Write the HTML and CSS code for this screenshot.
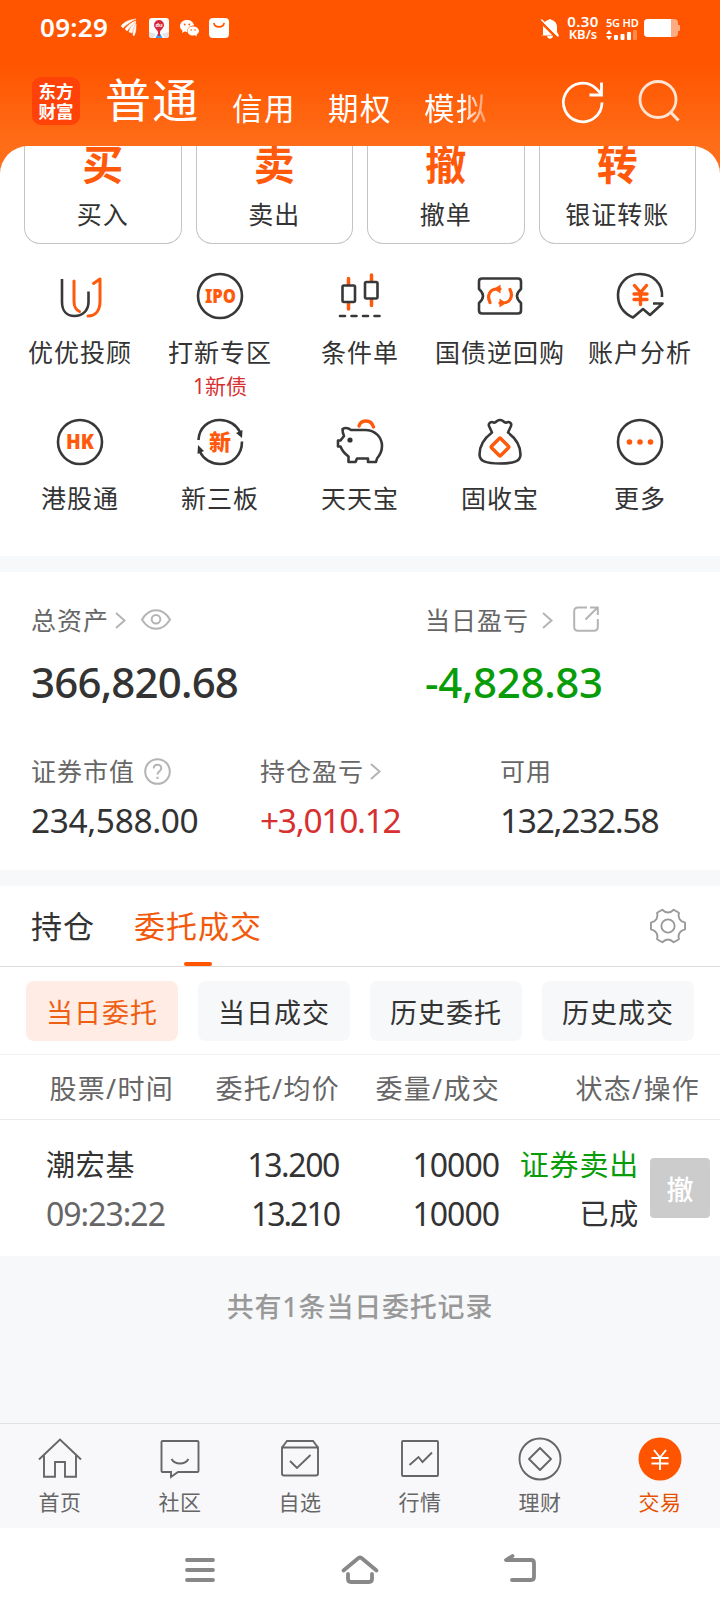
FILE: index.html
```html
<!DOCTYPE html>
<html lang="zh-CN">
<head>
    <meta charset="UTF-8">
    <meta name="viewport" content="width=device-width, initial-scale=1.0">
    <title>东方财富 交易</title>
    <link rel="stylesheet" href="styles.css">
</head>
<body>
    <header class="top">
        <!-- Status bar -->
        <div class="status">
            <span class="clock">09:29</span>
            <svg class="st-wing" width="16" height="18" viewBox="0 0 16 18" fill="#fff"><path d="M0 7C4 2 9 1 15 0 9 3 6 5 2 9zM4 10C7 6 11 3 15 2 12 5 9 8 6 12zM8 13c1-4 3-7 7-10-1 3-3 6-4 11zM12 16c0-4 1-7 3-11 0 4 0 8-2 12z" stroke="#fff" stroke-width=".5"/></svg>
            <svg class="st-map" width="20" height="20" viewBox="0 0 20 20"><rect width="20" height="20" rx="3" fill="#fff"/><path d="M0 14l7 2-3 4H3a3 3 0 0 1-3-3zM20 14l-7 2 3 4h1a3 3 0 0 0 3-3z" fill="#e6e3e6"/><path d="M8.500 16h3l2 4h-7z" fill="#4d9be8"/><path d="M10 2a5 5 0 0 0-5 5c0 3 3 4.500 4 7v4h2v-4c1-2.500 4-4 4-7a5 5 0 0 0-5-5z" fill="#d9283c"/><text x="10" y="9" font-size="5.500" font-weight="700" text-anchor="middle" fill="#fff">du</text></svg>
            <svg class="st-chat" width="19" height="17" viewBox="0 0 19 17" fill="#fff"><path d="M7 0C3 0 0 2.700 0 6c0 2 1 3.500 2.500 4.500L2 13l2.500-1.500L7 12c0-4 3-6.500 7-6.500C13.500 2 10.500 0 7 0z"/><path d="M13 6.500c-3.300 0-5.500 2-5.500 4.500s2.200 4.500 5.500 4.500l1.800-.3L17 16.300l-.4-1.900c1.400-.8 2.400-2 2.400-3.400 0-2.500-2.700-4.500-6-4.500z"/><g fill="#ff5500"><circle cx="4.700" cy="4.500" r=".9"/><circle cx="9.300" cy="4.500" r=".9"/><circle cx="11.200" cy="10" r=".8"/><circle cx="15" cy="10" r=".8"/></g></svg>
            <svg class="st-bag" width="20" height="20" viewBox="0 0 20 20"><rect width="20" height="20" rx="4" fill="#fff"/><path d="M5 5.500c1 4.500 9 4.500 10 0" fill="none" stroke="#ff5500" stroke-width="1.700" stroke-linecap="round"/></svg>
            <div class="status-right">
                <svg width="18" height="21" viewBox="0 0 18 21"><path d="M2 17V9c0-4 2.500-6.500 5.500-7a1.600 1.600 0 0 1 3 0C13.500 2.500 16 5 16 9v5l2 3.500H0zM6 18h6c-.5 3.500-5.500 3.500-6 0z" fill="#fff"/><path d="M-.5 3.500L17 21" stroke="#ff5500" stroke-width="2.500"/><path d="M.3 1.500L17.500 18.500" stroke="#fff" stroke-width="1.500"/></svg>
                <div class="speed"><span>0.30</span><span>KB/s</span></div>
                <div class="signal">
                    <span>5G HD</span>
                    <svg width="31" height="10" viewBox="0 0 31 10" fill="#fff"><path d="M0 4l3-4 3 4zM0 6l3 4 3-4z"/><rect x="8" y="5" width="4" height="5" rx="1"/><rect x="14.500" y="4" width="4" height="6" rx="1"/><rect x="21" y="2" width="4" height="8" rx="1"/><rect x="27" y="0" width="4" height="10" rx="1" opacity=".3"/></svg>
                </div>
                <svg width="36" height="18" viewBox="0 0 36 18"><rect width="34" height="18" rx="4" fill="#ffab82"/><path d="M34 6h1q1 0 1 1v4q0 1-1 1h-1z" fill="#ffab82"/><path d="M4 0h23v18H4a4 4 0 0 1-4-4V4a4 4 0 0 1 4-4z" fill="#fff"/></svg>
            </div>
        </div>

        <!-- Account type tabs -->
        <div class="account-bar">
            <div class="logo"><span>东方</span><span>财富</span></div>
            <nav class="account-tabs">
                <a class="account-tab active">普通</a>
                <a class="account-tab">信用</a>
                <a class="account-tab">期权</a>
                <a class="account-tab fade">模拟</a>
            </nav>
            <svg class="refresh" width="42" height="42" viewBox="0 0 42 42" fill="none" stroke="#fff" stroke-width="2.800"><path d="M40 21.500A19.300 19.300 0 1 1 34 7.500L38.500 12M27.500 14h12V1.500"/></svg>
            <svg class="search" width="42" height="42" viewBox="0 0 42 42" fill="none" stroke="#ffe3d3" stroke-width="2.800"><circle cx="20" cy="19.500" r="18"/><path d="M32 31.500l8.500 9" stroke-width="3.200"/></svg>
        </div>
    </header>

    <main>
        <div class="panel-wrap">
            <section class="panel">
                <div class="actions">
                    <div class="action"><b>买</b><span>买入</span></div>
                    <div class="action"><b>卖</b><span>卖出</span></div>
                    <div class="action"><b>撤</b><span>撤单</span></div>
                    <div class="action"><b>转</b><span>银证转账</span></div>
                </div>

                <!-- Shortcuts -->
                <div class="shortcuts">
                    <div class="shortcut">
                        <svg class="icon" viewBox="0 0 48 48"><g class="dark"><path d="M6 7v23c0 9 5 14 12.500 14S32.500 39 32.500 30V19.500"/></g><g class="hot"><path d="M18 9v20c0 6 1.500 8.500 5.500 10.500M37.500 11.500l6.500-4.500v22c0 9-4 15-12 15" stroke-width="3"/></g></svg>
                        <span>优优投顾</span>
                    </div>
                    <div class="shortcut">
                        <svg class="icon" viewBox="0 0 48 48"><circle class="dark" cx="24" cy="24" r="22"/><text class="icon-text" x="24.500" y="31" font-size="19.500" textLength="31" lengthAdjust="spacingAndGlyphs">IPO</text></svg>
                        <span>打新专区</span>
                        <em>1新债</em>
                    </div>
                    <div class="shortcut">
                        <svg class="icon" viewBox="0 0 48 48"><g class="hot"><path d="M12.500 6.500v6M12.500 31v6M35.500 3v6M35.500 27.500v6" stroke-width="3.500"/></g><g class="dark"><rect x="6.500" y="13.500" width="12.500" height="16.500" rx="1.500"/><rect x="29" y="10" width="12.500" height="16.500" rx="1.500"/><path d="M4 44h5M15.500 44h5M27 44h5M38.500 44h5" stroke-linecap="round"/></g></svg>
                        <span>条件单</span>
                    </div>
                    <div class="shortcut">
                        <svg class="icon" viewBox="0 0 48 48"><path class="dark" d="M6 6.500h36q3 0 3 3V17q-4 3.500-4 7t4 7v7.500q0 3-3 3H6q-3 0-3-3V31q4-3.500 4-7t-4-7V9.500q0-3 3-3z"/><g class="hot"><path d="M14 30.500c-3.500-7 0-13.500 7-13.500h3M34 17.500c3.500 7 0 13.500-7 13.500h-3" stroke-width="3.200"/></g><path d="M24.500 12.500v9L18 17zM23.500 26.500v9L30 31z" fill="#ff5a0c"/></svg>
                        <span>国债逆回购</span>
                    </div>
                    <div class="shortcut">
                        <svg class="icon" viewBox="0 0 48 48"><path class="dark" d="M46 25C47 12 37 2 24 2 11 2 2 12 2 23c0 10 5 18 15 22.500L27 37l7 6 12.500-11.500H37"/><g class="hot"><path d="M18.500 13.500l6 7 6-7M24.500 20.500v12M18 22h13M18 27.500h13" stroke-width="3.400"/></g></svg>
                        <span>账户分析</span>
                    </div>
                    <div class="shortcut">
                        <svg class="icon" viewBox="0 0 48 48"><circle class="dark" cx="24" cy="24" r="22"/><text class="icon-text" x="24" y="31" font-size="20.500" textLength="28" lengthAdjust="spacingAndGlyphs">HK</text></svg>
                        <span>港股通</span>
                    </div>
                    <div class="shortcut">
                        <svg class="icon" viewBox="0 0 48 48"><g class="dark"><path d="M2.500 22C3 10 12 2 24 2c9 0 16.500 5 20 12M46 23.500C46 37 36.500 46 24 46 15 46 7.500 41 4 34"/></g><path d="M40 15l6.500-3-.5 8zM8 33l-6.500 3 .5-9z" fill="#333"/><text class="icon-text" x="24" y="31.500" font-size="22" text-anchor="middle">新</text></svg>
                        <span>新三板</span>
                    </div>
                    <div class="shortcut">
                        <svg class="icon" viewBox="0 0 48 48"><path class="dark" d="M15 12C12.500 10 9 9.500 6.500 11c0 3 .5 5 1.500 7l-3.500 4.500H2v6h2.500c1.500 4 4 7 8 10v5.500h7l1.500-3.500h11v3.500h8l1-3.500c3-3.500 5-8 5-12.500 0-9-7-16-17-16H20z"/><path class="hot" d="M23 8c2-6.500 12-7 14.500 1" stroke-width="3.400"/><circle cx="14" cy="22" r="2.600" fill="#333"/></svg>
                        <span>天天宝</span>
                    </div>
                    <div class="shortcut">
                        <svg class="icon" viewBox="0 0 48 48"><path class="dark" d="M16 14.500L13 8c-1-2.500 2-5 4.500-3.500Q19 5 21 3q3-2 6 0 2 2 3.500 1.500c3-1.500 5.500 1 4.500 3.500l-3 6.500c8 6 12.500 14 12.500 22 0 7-7 9-20.500 9S3.500 43.500 3.500 36.500c0-8 4.500-16 12.500-22z"/><rect class="hot" x="17.500" y="22.500" width="13" height="13" rx="1" transform="rotate(45 24 29)" stroke-width="3.400"/></svg>
                        <span>固收宝</span>
                    </div>
                    <div class="shortcut">
                        <svg class="icon" viewBox="0 0 48 48"><circle class="dark" cx="24" cy="24" r="22"/><g fill="#ff5a0c"><circle cx="13.500" cy="24" r="2.800"/><circle cx="24" cy="24" r="2.800"/><circle cx="34.500" cy="24" r="2.800"/></g></svg>
                        <span>更多</span>
                    </div>
                </div>
            </section>
        </div>

        <!-- Assets -->
        <section class="assets">
            <div class="asset-row main-row">
                <div class="asset">
                    <div class="asset-label">总资产
                        <svg class="arrow" width="11" height="17" viewBox="0 0 11 17"><path d="M1 1l8.500 7.500L1 16"/></svg>
                        <svg class="eye" width="30" height="21" viewBox="0 0 30 21"><path d="M1 10.500C4.500 4.500 9.500 1.200 15 1.200s10.500 3.300 14 9.300c-3.500 6-8.500 9.300-14 9.300S4.500 16.500 1 10.500z"/><circle cx="15" cy="10.300" r="4.300"/></svg>
                    </div>
                    <div class="asset-value">366,820.68</div>
                </div>
                <div class="asset">
                    <div class="asset-label">当日盈亏
                        <svg class="arrow wide" width="11" height="17" viewBox="0 0 11 17"><path d="M1 1l8.500 7.500L1 16"/></svg>
                        <svg class="share" width="26" height="26" viewBox="0 0 26 26"><path d="M14 1.500H5Q1.200 1.500 1.200 5v16q0 3.800 3.800 3.800h16q3.800 0 3.800-3.800V13M12.500 13.500L24 2M17 1.500h7.800V9"/></svg>
                    </div>
                    <div class="asset-value down">-4,828.83</div>
                </div>
            </div>
            <div class="asset-row sub-row">
                <div class="asset">
                    <div class="asset-label">证券市值
                        <svg class="help" width="27" height="27" viewBox="0 0 27 27"><circle cx="13.500" cy="13.500" r="12.300"/><path d="M9.700 10.500c0-5 7.600-5 7.600-.3 0 3.200-3.800 3-3.800 6.300M13.500 18.800v2.200"/></svg>
                    </div>
                    <div class="asset-value">234,588.00</div>
                </div>
                <div class="asset">
                    <div class="asset-label">持仓盈亏
                        <svg class="arrow near" width="11" height="17" viewBox="0 0 11 17"><path d="M1 1l8.500 7.500L1 16"/></svg>
                    </div>
                    <div class="asset-value narrow up">+3,010.12</div>
                </div>
                <div class="asset">
                    <div class="asset-label">可用</div>
                    <div class="asset-value narrow">132,232.58</div>
                </div>
            </div>
        </section>

        <!-- Orders -->
        <section class="orders">
            <div class="order-tabs">
                <a class="order-tab">持仓</a>
                <a class="order-tab active">委托成交</a>
                <svg class="gear" width="36" height="36" viewBox="0 0 38 38"><path d="M13 1.800Q16 4.800 19 4.800t6-3l5.500 3.200q-1 4 .6 6.700t5.900 3.800v7q-4.300 1.100-5.900 3.800t-.6 6.700L25 36.200q-3-3-6-3t-6 3L7.500 33q1-4-.6-6.700T1 22.500v-7q4.300-1.100 5.900-3.800T7.500 5z" stroke-linejoin="round"/><circle cx="19" cy="19" r="7"/></svg>
            </div>
            <div class="filters">
                <button class="filter active">当日委托</button>
                <button class="filter">当日成交</button>
                <button class="filter">历史委托</button>
                <button class="filter">历史成交</button>
            </div>
            <div class="table-head">
                <span>股票/时间</span>
                <span>委托/均价</span>
                <span>委量/成交</span>
                <span>状态/操作</span>
            </div>
            <div class="table-row">
                <div class="cell name"><span>潮宏基</span><span class="num time">09:23:22</span></div>
                <div class="cell"><span class="num price">13.200</span><span class="num price last">13.210</span></div>
                <div class="cell"><span class="num">10000</span><span class="num">10000</span></div>
                <div class="cell"><span class="down">证券卖出</span><span>已成</span></div>
                <button class="cancel">撤</button>
            </div>
        </section>

        <p class="summary">共有1条当日委托记录</p>
    </main>

    <!-- Bottom tabs -->
    <nav class="tabbar">
        <a class="tab"><svg viewBox="0 0 44 44"><path d="M1 22.500L22 2.500l21 20M6 18.500v21.300h11V25h10v14.800h11V18.500"/></svg><span>首页</span></a>
        <a class="tab"><svg viewBox="0 0 44 44"><path d="M4.500 4h35q1 0 1 1v29q0 1-1 1H20l-7 5v-5H4.500q-1 0-1-1V5q0-1 1-1zM13.500 22c3.500 6 13.500 6 17 0"/></svg><span>社区</span></a>
        <a class="tab"><svg viewBox="0 0 44 44"><path d="M4 10.500h36v26q0 2-2 2H6q-2 0-2-2zM4 10.500L9 4h26l5 6.500M12 24l7 7 13.500-13"/></svg><span>自选</span></a>
        <a class="tab"><svg viewBox="0 0 44 44"><rect x="4" y="4" width="36" height="35" rx="1"/><path d="M11.500 28l9-8 4 5 9.500-9.500"/></svg><span>行情</span></a>
        <a class="tab"><svg viewBox="0 0 44 44"><circle cx="22" cy="22" r="20.500"/><path d="M22 11l11 11-11 11-11-11z" stroke-linejoin="round"/></svg><span>理财</span></a>
        <a class="tab active"><svg viewBox="0 0 44 44"><circle cx="22" cy="22" r="20.500" fill="#ff5500" stroke="#ff5500"/><path d="M16 13l6 7.500 6-7.500M13.500 21h17M13.500 26.500h17M22 20.500V33" stroke="#fff"/></svg><span>交易</span></a>
    </nav>

    <!-- System navigation -->
    <div class="sysnav">
        <svg width="32" height="26" viewBox="0 0 32 26"><path d="M3 3h26M3 13h26M3 23h26"/></svg>
        <svg width="38" height="30" viewBox="0 0 38 30"><path d="M2.500 15.500L17.500 3q1.500-1 3 0l15 12.500M7 19V24q0 3 3 3h18q3 0 3-3v-5"/></svg>
        <svg width="32" height="30" viewBox="0 0 32 30"><path d="M8.500 1L2 5h25q3 0 3 3v14q0 3-3 3H8"/></svg>
    </div>
</body>
</html>
```
FILE: styles.css
```css
* {
    box-sizing: border-box;
}
body {
    margin: 0;
    width: 720px;
    height: 1612px;
    font-family: "Noto Sans", "Noto Sans CJK SC", sans-serif;
    font-size: 25px;
    line-height: 1;
    color: #333;
    background-color: #f7f8fa;
    overflow: hidden;
}
svg {
    display: block;
    flex: none;
    overflow: visible;
}
button {
    border: none;
    padding: 0;
    font-family: inherit;
}
.up {
    color: #d63031;
}
.down {
    color: #099c09;
}

/* header */
.top {
    height: 146px;
    background: linear-gradient(#ff5500 44%, #ff6d18);
    color: #fff;
}
.status {
    display: flex;
    align-items: center;
    height: 56px;
    padding: 0 40px;
}
.clock {
    width: 70px;
    margin-top: -2px;
    font-size: 26px;
    font-weight: 600;
    letter-spacing: 0.3px;
}
.st-wing {
    margin-left: 11px;
}
.st-map {
    margin-left: 12px;
}
.st-chat {
    margin-left: 11px;
}
.st-bag {
    margin-left: 10px;
}
.status-right {
    display: flex;
    align-items: center;
    margin-left: auto;
}
.speed {
    display: flex;
    flex-direction: column;
    align-items: center;
    width: 34px;
    margin-left: 7px;
    font-size: 13px;
    line-height: 13px;
    font-weight: 600;
    white-space: nowrap;
}
.speed span:first-child {
    font-size: 15px;
    letter-spacing: 0.4px;
}
.signal {
    width: 32px;
    margin: 0 6px 0 6px;
    font-size: 11px;
    line-height: 11px;
    font-weight: 600;
    letter-spacing: -0.2px;
    white-space: nowrap;
}
.signal svg {
    margin-top: 2px;
}
.account-bar {
    display: flex;
    height: 90px;
    padding: 0 40px 0 32px;
}
.logo {
    display: flex;
    flex-direction: column;
    align-items: center;
    width: 48px;
    height: 48px;
    margin-top: 21px;
    padding-top: 4px;
    border-radius: 9px;
    background-color: #ff4208;
    font-size: 17.5px;
    line-height: 20px;
    font-weight: 700;
}
.account-tabs {
    display: flex;
    align-items: flex-end;
    width: 462px;
    height: 70px;
    padding-left: 25px;
}
.account-tab {
    width: 96px;
    font-size: 30.5px;
    line-height: 36px;
    letter-spacing: 1.5px;
    white-space: nowrap;
}
.account-tab.active {
    width: 127px;
    font-size: 46px;
    line-height: 53px;
    letter-spacing: 1px;
}
.account-tab.fade {
    width: 64px;
    -webkit-mask-image: linear-gradient(90deg, #000 60%, rgba(0, 0, 0, 0.3));
    mask-image: linear-gradient(90deg, #000 60%, rgba(0, 0, 0, 0.3));
}
.refresh {
    margin-top: 25px;
    margin-left: 20px;
}
.search {
    margin-top: 24px;
    margin-left: 34px;
}

/* panel with actions and shortcuts */
.panel-wrap {
    background-color: #ff6d18;
}
.panel {
    height: 410px;
    background-color: #fff;
    border-radius: 28px 28px 0 0;
}
.actions {
    display: flex;
    gap: 14px;
    padding: 0 24px;
}
.action {
    display: flex;
    flex: 1;
    flex-direction: column;
    align-items: center;
    height: 98px;
    border: 1px solid #c4c4c4;
    border-top: none;
    border-radius: 0 0 16px 16px;
    overflow: hidden;
}
.action b {
    margin-top: -5px;
    font-size: 41px;
    line-height: 46px;
    color: #ff5a0c;
}
.action span {
    margin-top: 12px;
    line-height: 30px;
    letter-spacing: 1px;
}
.shortcuts {
    display: grid;
    grid-template-columns: repeat(5, 140px);
    grid-template-rows: 146px 120px;
    padding: 28px 10px 0;
}
.shortcut {
    display: flex;
    flex-direction: column;
    align-items: center;
    white-space: nowrap;
}
.shortcut span {
    margin-top: 17px;
    line-height: 30px;
    letter-spacing: 1px;
}
.shortcut em {
    margin-top: 6px;
    font-size: 21px;
    line-height: 26px;
    font-style: normal;
    color: #d63031;
}
.icon {
    width: 48px;
    height: 48px;
    fill: none;
}
.dark {
    fill: none;
    stroke: #383838;
    stroke-width: 2.6;
    stroke-linejoin: round;
}
.hot {
    fill: none;
    stroke: #ff5a0c;
    stroke-linecap: round;
    stroke-linejoin: round;
}
.icon-text {
    fill: #ff5a0c;
    font-weight: 900;
    text-anchor: middle;
}

/* assets */
.assets {
    height: 298px;
    margin-top: 16px;
    padding: 33px 30px 0 31px;
    background-color: #fff;
}
.asset-row {
    display: grid;
}
.main-row {
    grid-template-columns: 394px 1fr;
}
.sub-row {
    grid-template-columns: 229px 240px 1fr;
    margin-top: 54px;
}
.asset-label {
    display: flex;
    align-items: center;
    height: 30px;
    color: #666;
    letter-spacing: 1px;
    white-space: nowrap;
}
.asset-label svg {
    fill: none;
    stroke: #b4b4b4;
    stroke-width: 2;
}
.arrow {
    margin-left: 6px;
}
.arrow.wide {
    margin-left: 13px;
}
.arrow.near {
    margin-left: 6px;
}
.eye {
    margin-left: 15px;
    margin-bottom: 2px;
}
.share {
    margin-left: 20px;
    margin-bottom: 2px;
}
.help {
    margin-left: 9px;
}
.asset-value {
    height: 40px;
    white-space: nowrap;
}
.main-row .asset-value {
    margin-top: 27px;
    font-size: 42px;
    line-height: 40px;
    font-weight: 500;
    letter-spacing: -0.8px;
}
.main-row .asset-value.down {
    letter-spacing: -0.3px;
}
.sub-row .asset-value {
    margin-top: 14px;
    font-size: 33.5px;
    line-height: 40px;
    letter-spacing: -0.4px;
}
.sub-row .asset-value.narrow {
    letter-spacing: -1.3px;
}

/* orders */
.orders {
    margin-top: 16px;
    background-color: #fff;
}
.order-tabs {
    display: flex;
    align-items: center;
    height: 81px;
    padding: 0 34px 0 31px;
    border-bottom: 1px solid #ddd;
}
.order-tab {
    position: relative;
    font-size: 31px;
    line-height: 80px;
    letter-spacing: 1px;
}
.order-tab.active {
    margin-left: 39px;
    color: #f2590d;
}
.order-tab.active::after {
    content: "";
    position: absolute;
    left: 50px;
    bottom: 0;
    width: 28px;
    height: 4px;
    border-radius: 2px;
    background-color: #ff5500;
}
.gear {
    margin-left: auto;
    fill: none;
    stroke: #999;
    stroke-width: 2;
}
.filters {
    display: flex;
    gap: 20px;
    padding: 14px 26px 13px;
}
.filter {
    width: 152px;
    height: 60px;
    border-radius: 8px;
    background-color: #f7f8fa;
    color: #333;
    font-size: 27px;
    letter-spacing: 1px;
}
.filter.active {
    background-color: #ffede5;
    color: #ee5f14;
}
.table-head {
    display: grid;
    grid-template-columns: 174px 166px 160px 200px;
    height: 66px;
    border-top: 1px solid #f3f3f5;
    border-bottom: 1px solid #ebebeb;
    font-size: 27px;
    line-height: 68px;
    letter-spacing: 1.3px;
    color: #666;
    text-align: right;
    white-space: nowrap;
}
.table-row {
    display: grid;
    grid-template-columns: 174px 165px 160px 140px 60px;
    height: 136px;
    padding-top: 20px;
    font-size: 29px;
}
.cell {
    display: flex;
    flex-direction: column;
    align-items: flex-end;
    line-height: 49px;
    letter-spacing: 0.8px;
    white-space: nowrap;
}
.cell.name {
    align-items: flex-start;
    padding-left: 46px;
}
.num {
    font-size: 32px;
    letter-spacing: -1px;
}
.num.price {
    letter-spacing: -1.4px;
}
.num.price.last {
    letter-spacing: -2px;
}
.num.time {
    color: #666;
    letter-spacing: -1px;
}
.cancel {
    width: 60px;
    height: 60px;
    margin: 18px 0 0 11px;
    border-radius: 4px;
    background-color: #ccc;
    color: #fff;
    font-size: 27px;
    font-weight: 500;
}
.summary {
    height: 167px;
    margin: 0;
    padding-top: 32px;
    font-size: 27px;
    line-height: 38px;
    font-weight: 500;
    letter-spacing: 0.8px;
    text-align: center;
    color: #999;
}

/* bottom tabs */
.tabbar {
    display: flex;
    height: 105px;
    border-top: 1px solid #e2e2e5;
    background-color: #f8f8fb;
}
.tab {
    display: flex;
    flex: 1;
    flex-direction: column;
    align-items: center;
    padding-top: 13px;
    font-size: 21px;
    line-height: 26px;
    letter-spacing: 0.5px;
    color: #666;
}
.tab svg {
    width: 44px;
    height: 44px;
    fill: none;
    stroke: #666;
    stroke-width: 1.9;
}
.tab span {
    margin-top: 8px;
}
.tab.active {
    color: #e65100;
}
.sysnav {
    display: flex;
    align-items: center;
    justify-content: center;
    gap: 125px;
    height: 84px;
    background-color: #fff;
}
.sysnav svg {
    fill: none;
    stroke: #888;
    stroke-width: 3.8;
    stroke-linecap: round;
    stroke-linejoin: round;
}
```
